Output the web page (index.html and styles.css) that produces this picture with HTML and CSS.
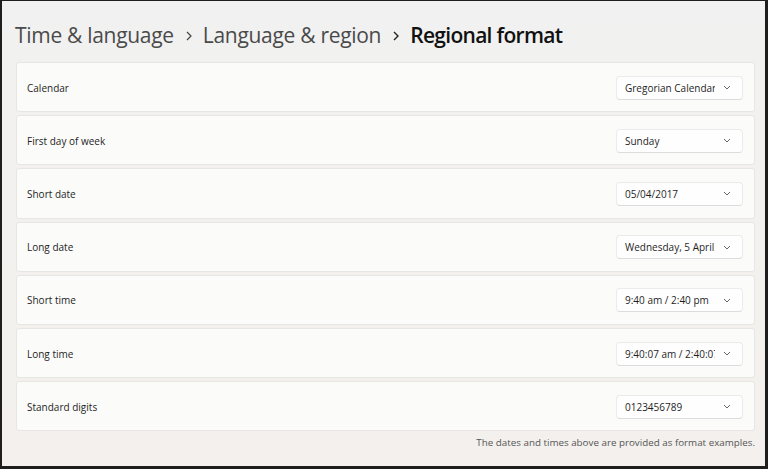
FILE: index.html
```html
<!DOCTYPE html>
<html lang="en">
<head>
<meta charset="utf-8">
<title>Regional format</title>
<link rel="stylesheet" href="styles.css">
</head>
<body>
<div class="frame">
  <h1 class="crumbs">
    <span class="crumb">Time &amp; language</span>
    <svg class="sep" viewBox="0 0 8 12" width="8" height="12"><path d="M2 2 L6 6 L2 10" fill="none" stroke="#444" stroke-width="1.2"/></svg>
    <span class="crumb">Language &amp; region</span>
    <svg class="sep" viewBox="0 0 8 12" width="8" height="12"><path d="M2 2 L6 6 L2 10" fill="none" stroke="#222" stroke-width="1.4"/></svg>
    <span class="crumb current">Regional format</span>
  </h1>
  <div class="list">
    <div class="row"><span class="label">Calendar</span><div class="select"><span class="value">Gregorian Calendar</span><svg class="chev" viewBox="0 0 8 5" width="8" height="5"><path d="M1 1 L4 4 L7 1" fill="none" stroke="#666" stroke-width="1"/></svg></div></div>
    <div class="row"><span class="label">First day of week</span><div class="select"><span class="value">Sunday</span><svg class="chev" viewBox="0 0 8 5" width="8" height="5"><path d="M1 1 L4 4 L7 1" fill="none" stroke="#666" stroke-width="1"/></svg></div></div>
    <div class="row"><span class="label">Short date</span><div class="select"><span class="value">05/04/2017</span><svg class="chev" viewBox="0 0 8 5" width="8" height="5"><path d="M1 1 L4 4 L7 1" fill="none" stroke="#666" stroke-width="1"/></svg></div></div>
    <div class="row"><span class="label">Long date</span><div class="select"><span class="value">Wednesday, 5 April</span><svg class="chev" viewBox="0 0 8 5" width="8" height="5"><path d="M1 1 L4 4 L7 1" fill="none" stroke="#666" stroke-width="1"/></svg></div></div>
    <div class="row"><span class="label">Short time</span><div class="select"><span class="value">9:40 am / 2:40 pm</span><svg class="chev" viewBox="0 0 8 5" width="8" height="5"><path d="M1 1 L4 4 L7 1" fill="none" stroke="#666" stroke-width="1"/></svg></div></div>
    <div class="row"><span class="label">Long time</span><div class="select"><span class="value">9:40:07 am / 2:40:07 pm</span><svg class="chev" viewBox="0 0 8 5" width="8" height="5"><path d="M1 1 L4 4 L7 1" fill="none" stroke="#666" stroke-width="1"/></svg></div></div>
    <div class="row"><span class="label">Standard digits</span><div class="select"><span class="value">0123456789</span><svg class="chev" viewBox="0 0 8 5" width="8" height="5"><path d="M1 1 L4 4 L7 1" fill="none" stroke="#666" stroke-width="1"/></svg></div></div>
  </div>
  <p class="note">The dates and times above are provided as format examples.</p>
</div>
</body>
</html>
```
FILE: styles.css
```css
html, body {
  margin: 0;
  padding: 0;
  width: 768px;
  height: 469px;
  overflow: hidden;
}
body {
  font-family: "Open Sans", "Noto Sans", sans-serif;
  color: #1b1b1b;
}
.frame {
  box-sizing: border-box;
  width: 768px;
  height: 469px;
  border-style: solid;
  border-color: #1e1e1e;
  border-width: 1px 3px 3px 2px;
  background: linear-gradient(180deg, #f1f1f1 0%, #f3f1ee 60%, #f3f0ed 100%);
  padding: 19px 10px 0 14px;
  display: flex;
  flex-direction: column;
}
.crumbs {
  margin: 0 0 0 -1px;
  font-size: 21px;
  font-weight: 400;
  line-height: 30px;
  height: 30px;
  display: flex;
  align-items: center;
  letter-spacing: -0.3px;
}
.crumb {
  color: #4a4a4a;
}
.crumb.current {
  color: #111;
  font-weight: 600;
  letter-spacing: -0.7px;
}
.sep {
  margin: 2px 10px 0 11px;
}
.list {
  margin-top: 12px;
  display: flex;
  flex-direction: column;
  gap: 3px;
}
.row {
  box-sizing: border-box;
  height: 50.2px;
  background: #fbfbfa;
  border: 1px solid #e8e6e3;
  border-radius: 3px;
  display: flex;
  align-items: center;
  justify-content: space-between;
  padding: 1px 11px 0 10px;
}
.label {
  font-size: 10px;
  color: #1e1e1e;
}
.select {
  box-sizing: border-box;
  width: 127px;
  height: 24px;
  background: #fefefe;
  border: 1px solid #ebebeb;
  border-bottom-color: #dcdcdc;
  border-radius: 4px;
  display: flex;
  align-items: center;
  padding: 0 11px 0 8px;
  gap: 8px;
}
.value {
  flex: 1;
  font-size: 10px;
  color: #1e1e1e;
  white-space: nowrap;
  overflow: hidden;
}
.chev {
  flex: none;
}
.note {
  margin: 5px 0 0 0;
  text-align: right;
  font-size: 9.8px;
  color: #555;
}
```
